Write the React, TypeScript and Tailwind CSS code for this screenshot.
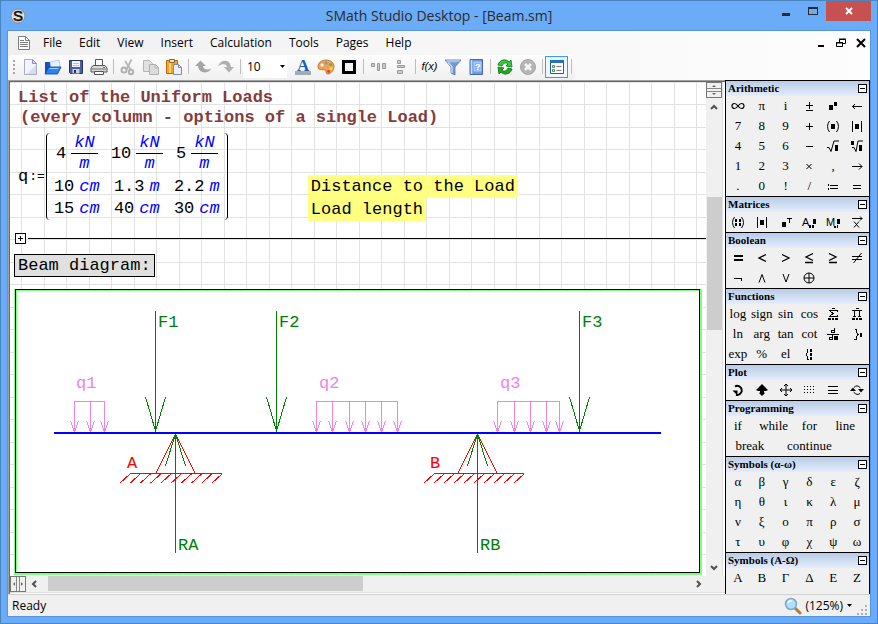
import { useState, type ReactNode } from "react";

type PaletteItem = {
  label: string;
  text?: string;
  icon?: ReactNode;
  span?: string;
};

type PaletteSection = {
  title: string;
  items: PaletteItem[];
};

const menus = ["File", "Edit", "View", "Insert", "Calculation", "Tools", "Pages", "Help"];

function textItems(symbols: string): PaletteItem[] {
  return symbols.split(" ").map((symbol) => ({ label: symbol, text: symbol }));
}

function Glyph({ children, smooth }: { children: ReactNode; smooth?: boolean }) {
  return (
    <svg aria-hidden="true" className="size-4" viewBox="0 0 16 16" fill="none" stroke="black" shapeRendering={smooth ? "auto" : "crispEdges"}>
      {children}
    </svg>
  );
}

function GlyphText({ x, y, size, children }: { x: number; y: number; size: number; children: string }) {
  return <text x={x} y={y} fontSize={size} fill="black" stroke="none" fontFamily="Liberation Sans, sans-serif">{children}</text>;
}

const solid = { fill: "black", stroke: "none" };

const arithmetic: PaletteItem[] = [
  { label: "Infinity", icon: <Glyph smooth><path strokeWidth="1.200" d="M8 8C6.500 6 5.500 5.500 4.500 5.500a2.500 2.500 0 0 0 0 5C5.500 10.500 6.500 10 8 8s2.500-2.500 3.500-2.500a2.500 2.500 0 0 1 0 5C10.500 10.500 9.500 10 8 8z" /></Glyph> },
  { label: "Pi", text: "π" },
  { label: "Imaginary unit", text: "i" },
  { label: "Plus minus", icon: <Glyph><path d="M5 7.500h7M8.500 4v7M5 12.500h7" /></Glyph> },
  { label: "Power", icon: <Glyph><path {...solid} d="M4 7h4v5h-4zM9 4h3v4h-3z" /></Glyph> },
  { label: "Backspace", icon: <Glyph><path d="M3 8.500h10M5.500 6v1M4.500 7v1M4.500 9v1M5.500 10v1" /></Glyph> },
  ...textItems("7 8 9"),
  { label: "Plus", icon: <Glyph><path d="M5 8.500h7M8.500 5v7" /></Glyph> },
  { label: "Parentheses", icon: <Glyph smooth><path d="M4.500 3Q.5 8.500 4.500 14M11.500 3Q15.500 8.500 11.500 14" /><path {...solid} d="M6 6h4v5h-4z" /></Glyph> },
  { label: "Absolute", icon: <Glyph><path d="M3.500 3v11M12.500 3v11" /><path {...solid} d="M6 6h4v5h-4z" /></Glyph> },
  ...textItems("4 5 6"),
  { label: "Minus", icon: <Glyph><path d="M5 8.500h7" /></Glyph> },
  { label: "Square root", icon: <Glyph smooth><path d="M2 9.500h2l2 4 3-10.500h5" /><path {...solid} d="M10 7h3v6h-3z" /></Glyph> },
  { label: "Nth root", icon: <Glyph smooth><path d="M3 9.500h2l2 4 2-10.500h5" /><path {...solid} d="M10 7h3v6h-3zM2 3h3v4h-3z" /></Glyph> },
  ...textItems("1 2 3"),
  { label: "Cross product", icon: <Glyph smooth><path d="M5.500 6l5 5M10.500 6l-5 5" /></Glyph> },
  { label: "Comma", text: "," },
  { label: "Symbolic evaluation", icon: <Glyph smooth><path d="M3 8.500h10M10 5.500l3 3-3 3" /></Glyph> },
  ...textItems(". 0 ! /"),
  { label: "Definition", icon: <Glyph><path strokeWidth="1" d="M3.500 6v2M3.500 10v2M5 7.500h8M5 10.500h8" /></Glyph> },
  { label: "Numeric evaluation", icon: <Glyph><path d="M4 7.500h8M4 10.500h8" /></Glyph> },
];

const matrices: PaletteItem[] = [
  { label: "Matrix", icon: <Glyph smooth><path d="M4.500 3Q.5 8.500 4.500 14M11.500 3Q15.500 8.500 11.500 14" /><path {...solid} d="M5 5h2v3h-2zM9 5h2v3h-2zM5 9h2v3h-2zM9 9h2v3h-2z" /></Glyph> },
  { label: "Determinant", icon: <Glyph><path d="M3.500 3v11M12.500 3v11" /><path {...solid} d="M6 6h4v5h-4z" /></Glyph> },
  { label: "Transpose", icon: <Glyph><path {...solid} d="M4 8h4v5h-4z" /><path d="M9 4.500h5M11.500 4v5" /></Glyph> },
  { label: "Algebraic addition", icon: <Glyph><GlyphText x={1} y={12} size={11}>A</GlyphText><path {...solid} d="M8 11h2v3h-2zM11 11h2v3h-2zM12 5h3v5h-3z" /></Glyph> },
  { label: "Minor", icon: <Glyph><GlyphText x={1} y={12} size={11}>M</GlyphText><path {...solid} d="M9 12h2v2h-2zM12 11h1v3h-1zM12 5h3v5h-3z" /></Glyph> },
  { label: "Vectorize", icon: <Glyph smooth><path d="M3 4.500h10M11 2.500l2 2-2 2M5 7.500l5 6M10 7.500l-5 6" /></Glyph> },
];

const boolean: PaletteItem[] = [
  { label: "Equal", icon: <Glyph><path {...solid} d="M4 5h9v2h-9zM4 9h9v2h-9z" /></Glyph> },
  { label: "Less", icon: <Glyph smooth><path strokeWidth="1.300" d="M12 4.500l-7 3.500 7 3.500" /></Glyph> },
  { label: "Greater", icon: <Glyph smooth><path strokeWidth="1.300" d="M4 4.500l7 3.500-7 3.500" /></Glyph> },
  { label: "Less or equal", icon: <Glyph smooth><path strokeWidth="1.300" d="M12 3.500l-7 3.500 7 3.500M4 12.500h8" /></Glyph> },
  { label: "Greater or equal", icon: <Glyph smooth><path strokeWidth="1.300" d="M4 3.500l7 3.500-7 3.500M4 12.500h8" /></Glyph> },
  { label: "Not equal", icon: <Glyph smooth><path d="M3 6.500h10M3 9.500h10M12.500 3l-8 10" /></Glyph> },
  { label: "Not", icon: <Glyph><path d="M4 8.500h8M11.500 8v3" /></Glyph> },
  { label: "And", icon: <Glyph smooth><path d="M5 12.500l3-8 3 8" /></Glyph> },
  { label: "Or", icon: <Glyph smooth><path d="M5 4l3 8 3-8" /></Glyph> },
  { label: "Exclusive or", icon: <Glyph smooth><circle cx="8" cy="8" r="5" /><path d="M8 3v10M3 8h10" /></Glyph> },
];

const functions: PaletteItem[] = [
  ...textItems("log sign sin cos"),
  { label: "Summation", icon: <Glyph><path d="M12.500 6V4.500H4.500L8 7.500 4.500 10.500H12.500V9M7 2.500h3" /><path {...solid} d="M3 12h3v2h-3zM7 12h2v2h-2zM10 12h3v2h-3z" /></Glyph> },
  { label: "Product", icon: <Glyph><path d="M3 4.500h10M5.500 4v7M10.500 4v7M4 10.500h3M9 10.500h3M7 2.500h3" /><path {...solid} d="M3 12h3v2h-3zM7 12h2v2h-2zM10 12h3v2h-3z" /></Glyph> },
  ...textItems("ln arg tan cot"),
  { label: "Differentiation", icon: <Glyph><path d="M2 8.500h12M9.500 2v5M9 6.500H6.500V4.500H9M7.500 9v5M7 13.500H4.500V11.500H7" /><path {...solid} d="M9 10h4v4h-4z" /></Glyph> },
  { label: "Integral", icon: <Glyph><path d="M6 3.500h1.500M7.500 4v3M8.500 7v3M9.500 8v1M7.500 10v2M5 13.500h2.500V12" /><path {...solid} d="M11 7h2v4h-2z" /></Glyph> },
  ...textItems("exp % el"),
  { label: "Algorithm", icon: <Glyph><path d="M7 3.500H6.500V7M5.500 7v3M6.500 10v4M7 13.500h1" /><path {...solid} d="M9 3h2v3h-2zM9 7h2v3h-2zM9 11h2v3h-2z" /></Glyph> },
];

const plot: PaletteItem[] = [
  { label: "Rotate", icon: <Glyph smooth><path strokeWidth="2" d="M5 4.500a4.500 4.500 0 1 1 1 8.200" /><path {...solid} d="M2.500 8.500h5v5z" /></Glyph> },
  { label: "Scale", icon: <Glyph smooth><path {...solid} d="M8 2l6 6-2 1h-2v1.500l1 .5-3 3-3-3 1-.5V9H4L2 8z" /></Glyph> },
  { label: "Move", icon: <Glyph smooth><path d="M8 2v12M2 8h12M6 4l2-2 2 2M6 12l2 2 2-2M4 6L2 8l2 2M12 6l2 2-2 2" /></Glyph> },
  { label: "Graph by points", icon: <Glyph><path strokeDasharray="1 2" d="M3 4.500h11M3 7.500h11M3 10.500h11" /></Glyph> },
  { label: "Graph by lines", icon: <Glyph><path d="M3 4.500h10M3 8.500h10M3 11.500h10" /></Glyph> },
  { label: "Refresh", icon: <Glyph smooth><path d="M5 5.500Q8 2 11.500 6M11 11.500Q8 14 4.500 10" /><path {...solid} d="M9 7h6l-3 3.500zM1 9h6L4 5.500z" /></Glyph> },
];

const programming: PaletteItem[] = [
  { label: "if", text: "if" },
  { label: "while", text: "while", span: "col-span-2" },
  { label: "for", text: "for" },
  { label: "line", text: "line", span: "col-span-2" },
  { label: "break", text: "break", span: "col-span-2" },
  { label: "continue", text: "continue", span: "col-span-3" },
];

const sections: PaletteSection[] = [
  { title: "Arithmetic", items: arithmetic },
  { title: "Matrices", items: matrices },
  { title: "Boolean", items: boolean },
  { title: "Functions", items: functions },
  { title: "Plot", items: plot },
  { title: "Programming", items: programming },
  { title: "Symbols (α-ω)", items: textItems("α β γ δ ε ζ η θ ι κ λ μ ν ξ ο π ρ σ τ υ φ χ ψ ω") },
  { title: "Symbols (Α-Ω)", items: textItems("Α Β Γ Δ Ε Ζ Η Θ Ι Κ Λ Μ") },
];

function Palette({ title, items }: PaletteSection) {
  const [open, setOpen] = useState(true);
  return (
    <section className="shrink-0 border-t border-black">
      <div className="flex h-[15px] items-center justify-between bg-linear-to-b from-[#b9cce6] to-[#e4edfb] px-0.5">
        <h2 className="text-[11px] leading-[15px] font-bold">{title}</h2>
        <button type="button" aria-label={`Toggle ${title}`} aria-expanded={open} onClick={() => setOpen(!open)} className="flex size-[9px] items-center justify-center border border-black bg-white">
          <span className="h-px w-[5px] bg-black" />
        </button>
      </div>
      {open && (
        <div className="grid grid-cols-6">
          {items.map((item) => (
            <button type="button" key={item.label} aria-label={item.label} className={`flex h-5 items-center justify-center text-[13px] leading-5 ${item.span ?? ""}`}>
              {item.icon ?? item.text}
            </button>
          ))}
        </div>
      )}
    </section>
  );
}

function ToolButton({ label, active, children }: { label: string; active?: boolean; children: ReactNode }) {
  return (
    <button type="button" aria-label={label} aria-pressed={active} className={`flex h-[22px] w-[23px] items-center justify-center ${active ? "border border-[#3399ff] bg-[#eef6ff]" : ""}`}>
      <svg aria-hidden="true" className="size-[18px] shrink-0" viewBox="0 0 18 18" fill="none">{children}</svg>
    </button>
  );
}

function Separator() {
  return <span className="ml-[3px] mr-0.5 h-[15px] w-px bg-[#bdbdbd]" />;
}

function Toolbar() {
  return (
    <div role="toolbar" className="flex h-[25px] items-center self-start rounded-sm bg-linear-to-b from-[#fdfdfd] to-[#f0f0f0] pr-px pb-0.5">
      <svg aria-hidden="true" className="mr-[3px] ml-[5px] h-4 w-0.5" viewBox="0 0 2 16"><path d="M1 1v14" stroke="#a9a9a9" strokeWidth="2" strokeDasharray="2 2" /></svg>
      <ToolButton label="New">
        <path d="M3.500 1.500h8l4 4v11h-12z" fill="#f1f4fc" stroke="#a9adba" /><path d="M11.500 1.500v4h4z" fill="#cfd6e8" stroke="#9096a8" /><path d="M6 16l9-9v9z" fill="#d5dcf0" />
      </ToolButton>
      <ToolButton label="Open">
        <path d="M1 4h5l1 1h6v11H1z" fill="#1750c4" /><path d="M6 4l9-2 1 7-9 3z" fill="#e9f3ff" stroke="#82aee8" strokeWidth=".6" /><path d="M1 16L4.500 9H17l-3.500 7z" fill="#2a83f2" stroke="#0b3fae" strokeWidth=".8" /><path d="M5.500 10.500h9" stroke="#9fd0ff" />
      </ToolButton>
      <ToolButton label="Save">
        <path d="M2.500 2.500h13v13h-12l-1-1z" fill="#4a5f9c" stroke="#26355f" /><path d="M5 3h8v6H5z" fill="#f1f4fb" /><path d="M6 5.500h6M6 7.500h6" stroke="#b8c2da" /><path d="M5.500 11h7v4.500h-7z" fill="#c8cede" /><path d="M7 12h2v3H7z" fill="#26355f" />
      </ToolButton>
      <ToolButton label="Print">
        <path d="M5.500 1.500h7v6h-7z" fill="#fff" stroke="#555" /><path d="M3 7.500h12l2 2.500v4H1v-4z" fill="#d8d8d8" stroke="#555" /><path d="M2 11h14" stroke="#777" /><path d="M4.500 13.500h9v3h-9z" fill="#fff" stroke="#555" /><path d="M13 9.500h2" stroke="#3aa83a" />
      </ToolButton>
      <Separator />
      <ToolButton label="Cut">
        <path d="M12.500 1.500l-5 10M6 3l6 9" stroke="#b9b9b9" strokeWidth="2" /><circle cx="5" cy="12" r="2.500" stroke="#b0b0b0" strokeWidth="2" /><circle cx="12" cy="14" r="2.200" stroke="#b0b0b0" strokeWidth="2" />
      </ToolButton>
      <ToolButton label="Copy">
        <path d="M1.500 2.500h6l3 3v8h-9z" fill="#e0e0e0" stroke="#b5b5b5" /><path d="M7.500 6.500h6l3 3v7h-9z" fill="#dcdcdc" stroke="#b0b0b0" /><path d="M13 6.500v3.500h3.500" stroke="#b0b0b0" />
      </ToolButton>
      <ToolButton label="Paste">
        <path d="M1.500 2.500h11v13h-11z" fill="#f5a623" stroke="#b8670d" /><path d="M4 4h2v11H4z" fill="#ffd27a" /><path d="M4.500 1.500h5v3h-5z" fill="#efe2b0" stroke="#8a6a2a" /><path d="M8.500 6.500h5l3 3v7h-8z" fill="#edf1fb" stroke="#7e8cb3" /><path d="M13.500 6.500v3h3" stroke="#7e8cb3" />
      </ToolButton>
      <Separator />
      <ToolButton label="Undo">
        <path d="M1 8l5.500-5.500L12 8H9c0 3 3 4 8 3-3 5-12 5-13-3z" fill="#a5a5a5" />
      </ToolButton>
      <ToolButton label="Redo">
        <path d="M17 9l-5 5.500L7 9h3c0-3-4-4-9-1C4 1 13 1 14 9z" fill="#b0b0b0" />
      </ToolButton>
      <Separator />
      <label className="relative mr-1 flex h-[22px] items-center bg-white">
        <span className="sr-only">Font size</span>
        <select defaultValue="10" className="h-[22px] w-[44px] appearance-none bg-white pl-1 text-xs outline-none">
          <option>8</option>
          <option>10</option>
          <option>12</option>
        </select>
        <svg aria-hidden="true" className="pointer-events-none absolute right-0.5 h-[3px] w-[5px]" viewBox="0 0 5 3"><path d="M0 0h5L2.500 3z" /></svg>
      </label>
      <ToolButton label="Text color">
        <path d="M1 13h16v4H1z" fill="#a6abb3" /><text x="3" y="13" fontSize="17" fontWeight="700" fontFamily="Liberation Serif, serif" fill="#1a5fb4">A</text>
      </ToolButton>
      <ToolButton label="Background color">
        <path d="M9 2c5 0 8 3 8 6.500S14 16 11 16c-3 0-1-3-3-4s-7 1-7-3 3-7 8-7z" fill="#efa24f" stroke="#b86a20" strokeWidth=".8" /><circle cx="5" cy="7" r="1.500" fill="#fff" /><circle cx="9" cy="5" r="1.500" fill="#5e9fe8" /><circle cx="13.500" cy="6.500" r="1.500" fill="#5bb552" /><circle cx="14" cy="10.500" r="1.500" fill="#f5e04f" /><circle cx="11.500" cy="13.500" r="1.400" fill="#d83f2e" />
      </ToolButton>
      <ToolButton label="Show border">
        <path d="M3.500 3.500h11v11h-11z" fill="#f4f4f4" stroke="#000" strokeWidth="3" />
      </ToolButton>
      <Separator />
      <ToolButton label="Align horizontally">
        <path d="M2.500 5.500h3v3h-3zM8.500 5.500h2v7h-2zM13.500 5.500h3v5h-3z" fill="#ccc" stroke="#999" />
      </ToolButton>
      <ToolButton label="Align vertically">
        <path d="M5.500 2.500h3v3h-3zM5.500 7.500h7v2h-7zM5.500 12.500h5v3h-5z" fill="#ccc" stroke="#999" />
      </ToolButton>
      <Separator />
      <button type="button" aria-label="Insert function" className="h-[22px] w-[23px] text-center font-['Liberation_Sans',sans-serif] text-[11px] italic">f(x)</button>
      <ToolButton label="Filter">
        <path d="M1 2h16l-6 7v8l-4-2V9z" fill="#7698cf" stroke="#5373a8" strokeWidth=".8" /><path d="M4 4l4 5v6" stroke="#c5d6f2" strokeWidth="1.500" /><ellipse cx="9" cy="3" rx="7.500" ry="1.500" fill="#a9c1e8" />
      </ToolButton>
      <ToolButton label="Reference book">
        <path d="M3 1.500h12.500v15H3z" fill="#6f9be3" stroke="#4668ab" /><path d="M4.500 2v14" stroke="#c6d9fa" strokeWidth="1.500" /><path d="M7 4h7v9H7z" fill="#8cb2f0" stroke="#cfe0ff" strokeWidth=".7" /><text x="8" y="12" fontSize="9" fontWeight="700" fontFamily="Liberation Sans, sans-serif" fill="#fff">?</text>
      </ToolButton>
      <Separator />
      <ToolButton label="Recalculate">
        <path d="M2 7c1-5 8-7 11-3l2-2 1 7-6-1 2-2c-2-2-5-1-6 2z" fill="#37c937" stroke="#08780c" strokeWidth=".8" /><path d="M16 11c-1 5-8 7-11 3l-2 2-1-7 6 1-2 2c2 2 5 1 6-2z" fill="#21a528" stroke="#08780c" strokeWidth=".8" />
      </ToolButton>
      <ToolButton label="Interrupt">
        <circle cx="9" cy="9" r="7.500" fill="#b5b5b5" stroke="#a5a5a5" /><path d="M6 6l6 6M12 6l-6 6" stroke="#f5f5f5" strokeWidth="2.500" />
      </ToolButton>
      <Separator />
      <ToolButton label="Side panel" active>
        <path d="M2.500 2.500h13v13h-13z" fill="#fff" stroke="#1e5c9c" /><path d="M2 2h14v3H2z" fill="#2670b8" /><path d="M4.500 7.500h2v2h-2zM4.500 11.500h2v2h-2z" stroke="#3f9b45" /><path d="M8.500 8.500h5M8.500 12.500h5" stroke="#777" />
      </ToolButton>
      <Separator />
    </div>
  );
}

function Fraction({ value }: { value: string }) {
  return (
    <>
      <span>{value}</span>
      <span className="flex flex-col text-center leading-5 text-[#0000ff] italic">
        <span className="border-b border-black px-[3px]">kN</span>
        <span>m</span>
      </span>
    </>
  );
}

const loadRows = [
  [["10", "cm"], ["1.3", "m"], ["2.2", "m"]],
  [["15", "cm"], ["40", "cm"], ["30", "cm"]],
];

function LoadMatrix() {
  return (
    <div className="mb-px flex items-center">
      <span>q</span>
      <span className="mx-px text-[13px]">:=</span>
      <table className="table-fixed border-separate border-spacing-0 rounded-[4px] border-x border-black">
        <tbody>
          <tr>
            {["4", "10", "5"].map((value) => (
              <td key={value} className="h-[43px] w-15 p-0 align-top">
                <div className="flex items-center justify-center gap-[5px]"><Fraction value={value} /></div>
              </td>
            ))}
          </tr>
          {loadRows.map((row, index) => (
            <tr key={index}>
              {row.map(([value, unit], column) => (
                <td key={column} className="h-[22px] w-15 p-0">
                  <div className="flex justify-center gap-[5px] leading-[22px]"><span>{value}</span><i className="text-[#0000ff]">{unit}</i></div>
                </td>
              ))}
            </tr>
          ))}
        </tbody>
      </table>
    </div>
  );
}

const forces = [
  { name: "F1", x: 139.5 },
  { name: "F2", x: 260.5 },
  { name: "F3", x: 563.5 },
];

const loads = [
  { name: "q1", labelX: 60, xs: [58.5, 74.5, 88.5] },
  { name: "q2", labelX: 303, xs: [300.5, 316.5, 333.5, 349.5, 365.5, 381.5] },
  { name: "q3", labelX: 484, xs: [481.5, 498.5, 514.5, 530.5, 543.5] },
];

const supports = [
  { name: "A", x: 159.5, ground: 114, width: 92, labelX: 111 },
  { name: "B", x: 461.5, ground: 418, width: 90, labelX: 414 },
];

function BeamDiagram() {
  return (
    <svg role="img" aria-label="Beam diagram" className="block" width="683" height="282" viewBox="0 0 683 282" fill="none" fontSize="17" shapeRendering="crispEdges">
      {loads.map(({ name, labelX, xs }) => (
        <g key={name} stroke="violet">
          <text x={labelX} y="98" fill="violet" stroke="none">{name}</text>
          <path d={`M${xs[0]} 111.5H${xs[xs.length - 1]}`} />
          {xs.map((x) => <path key={x} d={`M${x} 111v31M${x - 4} 131l4 11 4 -11`} />)}
        </g>
      ))}
      {forces.map(({ name, x }) => (
        <g key={name} stroke="green">
          <text x={x + 2.5} y="37" fill="green" stroke="none">{name}</text>
          <path d={`M${x} 21v121M${x - 10} 107l10 34 10 -34`} />
        </g>
      ))}
      {supports.map(({ name, x, ground, width, labelX }) => (
        <g key={name}>
          <path stroke="red" d={`M${x - 19.5} 183l19.500 -39 19.500 39M${ground} 183.5h${width}`} />
          {Array.from({ length: 10 }, (_, i) => <path key={i} stroke="red" d={`M${ground + (i * width) / 9} 184l-10 9`} />)}
          <text x={labelX} y="178" fill="red">{name}</text>
          <path stroke="green" d={`M${x} 144v119M${x - 10} 176l10 -32 10 32`} />
          <text x={x + 2.5} y="260" fill="green">{`R${name}`}</text>
        </g>
      ))}
      <path d="M38 143h607" stroke="blue" strokeWidth="2" />
    </svg>
  );
}

function Worksheet() {
  return (
    <main className="relative min-w-0 flex-1 overflow-hidden bg-white font-['Liberation_Mono',monospace] text-[17px]">
      <svg aria-hidden="true" className="absolute inset-0 size-full">
        <defs>
          <pattern id="grid" width="45" height="45" patternUnits="userSpaceOnUse">
            <path d="M11.500 0v45M34.500 0v45M0 22.500h45M0 .5h45" stroke="#e2e2e2" shapeRendering="crispEdges" />
          </pattern>
        </defs>
        <rect width="100%" height="100%" fill="url(#grid)" />
      </svg>
      <div className="relative flex flex-col pt-1.5 pl-1 whitespace-nowrap">
        <h1 className="pl-1 leading-5 font-bold text-[#843c3c]">
          <span className="block">List of the Uniform Loads</span>
          <span className="block pl-0.5">(every column - options of a single Load)</span>
        </h1>
        <div className="mt-[5px] flex items-end pl-1">
          <LoadMatrix />
          <div className="ml-20 flex flex-col items-start leading-[22px]">
            <span className="bg-[#ffff80] px-[3px] pt-px">Distance to the Load</span>
            <span className="bg-[#ffff80] px-[3px] pt-px">Load length</span>
          </div>
        </div>
        <div className="mt-3 flex items-center gap-0.5 pl-px">
          <button type="button" aria-label="Expand area" className="size-[11px] border border-black bg-white">
            <svg aria-hidden="true" className="size-[9px]" viewBox="0 0 9 9"><path d="M2 4.500h5M4.500 2v5" stroke="black" /></svg>
          </button>
          <span className="h-px flex-1 bg-black" />
        </div>
        <p className="mt-2.5 self-start border border-black bg-[#e0e0e0] px-[3px] leading-[21px]">Beam diagram:</p>
        <div className="mt-3 mr-1 bg-[#80ff80] pr-0.5 pb-0.5 pl-px">
          <div className="overflow-hidden border border-black bg-white shadow-[inset_1px_1px_0_#80ff80]">
            <BeamDiagram />
          </div>
        </div>
      </div>
    </main>
  );
}

function Chevron({ d }: { d: string }) {
  return <svg aria-hidden="true" className="size-2" viewBox="0 0 8 8" fill="none" stroke="#505050" strokeWidth="2"><path d={d} /></svg>;
}

function VerticalScroll() {
  return (
    <div className="flex w-4 flex-col items-stretch bg-[#f0f0f0]">
      <button type="button" aria-label="Split horizontally" className="flex h-4 items-center justify-center border border-[#777] bg-[#f0f0f0]">
        <svg aria-hidden="true" className="h-3.5 w-3.5" viewBox="0 0 14 14"><path d="M0 5.500h14M0 8.500h14" stroke="#888" /><path d="M5 4h4L7 2zM5 10h4l-2 2z" fill="#666" /></svg>
      </button>
      <button type="button" aria-label="Scroll up" className="flex h-[17px] items-center justify-center"><Chevron d="M1 6l3-3 3 3" /></button>
      <div className="flex flex-1 flex-col pl-px">
        <div className="grow-[82]" />
        <div className="grow-[133] bg-[#cdcdcd]" />
        <div className="grow-[229]" />
      </div>
      <button type="button" aria-label="Scroll down" className="flex h-[17px] items-center justify-center"><Chevron d="M1 2l3 3 3-3" /></button>
    </div>
  );
}

function HorizontalScroll() {
  return (
    <div className="flex h-4 shrink-0 items-stretch bg-[#f0f0f0]">
      <button type="button" aria-label="Split vertically" className="flex w-4 items-center justify-center border border-[#777] bg-[#f0f0f0]">
        <svg aria-hidden="true" className="h-3.5 w-3.5" viewBox="0 0 14 14"><path d="M5.500 0v14M8.500 0v14" stroke="#888" /><path d="M4 5v4L2 7zM10 5v4l2-2z" fill="#666" /></svg>
      </button>
      <button type="button" aria-label="Scroll left" className="flex w-[22px] items-center pl-1"><Chevron d="M6 1L3 4l3 3" /></button>
      <div className="flex flex-1 pb-px">
        <div className="grow-[315] bg-[#cdcdcd]" />
        <div className="grow-[328]" />
      </div>
      <button type="button" aria-label="Scroll right" className="mr-[18px] flex w-[17px] items-center justify-center"><Chevron d="M2 1l3 3-3 3" /></button>
    </div>
  );
}

function TitleBar() {
  return (
    <header className="grid h-[29px] shrink-0 grid-cols-[1fr_auto_1fr] items-center px-1.5 text-[#2b2b2b]">
      <svg aria-hidden="true" className="ml-[3px] size-4" viewBox="0 0 16 16">
        <circle cx="8" cy="8" r="7" fill="#dedede" stroke="#8d8d8d" />
        <text x="3" y="13" fontSize="15" stroke="#111" strokeWidth=".6" fontFamily="Liberation Sans, sans-serif" fill="#111">S</text>
      </svg>
      <span className="text-sm">SMath Studio Desktop - [Beam.sm]</span>
      <div className="flex items-start self-start justify-self-end">
        <button type="button" aria-label="Minimize" className="flex h-5 w-7 items-center justify-center">
          <svg aria-hidden="true" className="size-3" viewBox="0 0 12 12"><path d="M2 9.500h8" stroke="currentColor" strokeWidth="3" shapeRendering="crispEdges" /></svg>
        </button>
        <button type="button" aria-label="Maximize" className="flex h-5 w-[26px] items-center justify-center">
          <svg aria-hidden="true" className="size-3" viewBox="0 0 12 12" fill="none" stroke="currentColor" shapeRendering="crispEdges"><path d="M1.500 2.500h9v7h-9zM1 3.500h10" /></svg>
        </button>
        <button type="button" aria-label="Close" className="flex h-5 w-[45px] items-center justify-center bg-[#c75050]">
          <svg aria-hidden="true" className="size-2" viewBox="0 0 8 8" stroke="white" strokeWidth="2"><path d="M1 1l6 6M7 1L1 7" /></svg>
        </button>
      </div>
    </header>
  );
}

function MenuBar() {
  return (
    <nav className="flex h-6 items-center gap-px pr-[3px] pl-2">
      <svg aria-hidden="true" className="mr-0.5 size-4" viewBox="0 0 16 16" fill="none" stroke="#7d7d7d">
        <path d="M2.500 1.500h7l4 4v9h-11z" fill="#fff" /><path d="M9.500 1.500v4h4M4 5.500h4M4 7.500h8M4 9.500h8M4 11.500h8" />
      </svg>
      {menus.map((menu) => <button type="button" key={menu} className="px-2 text-xs">{menu}</button>)}
      <div className="ml-auto flex items-center gap-2">
        <button type="button" aria-label="Minimize document" className="size-3"><svg aria-hidden="true" className="size-3" viewBox="0 0 12 12"><path d="M3 9h6" stroke="black" strokeWidth="2" /></svg></button>
        <button type="button" aria-label="Restore document" className="size-3"><svg aria-hidden="true" className="size-3" viewBox="0 0 12 12" fill="none" stroke="black"><path d="M4.500 5V2.500h6v4H8M4 2h7M1.500 5.500h6v4h-6zM1 6h7" /></svg></button>
        <button type="button" aria-label="Close document" className="size-3"><svg aria-hidden="true" className="size-3" viewBox="0 0 12 12" stroke="black" strokeWidth="2"><path d="M2 2l8 8M10 2l-8 8" /></svg></button>
      </div>
    </nav>
  );
}

function StatusBar() {
  return (
    <footer className="flex h-[22px] shrink-0 items-center border-t border-[#d0d0d0] bg-[#f0f0f0] pr-0.5 pl-1 text-xs">
      <span>Ready</span>
      <button type="button" className="ml-auto flex items-center gap-[3px]">
        <svg aria-hidden="true" className="size-[18px]" viewBox="0 0 18 18">
          <path d="M11 11l5 5" stroke="#b87932" strokeWidth="3" strokeLinecap="round" /><circle cx="7" cy="7" r="5.500" fill="#aee0fb" stroke="#7fa9c9" strokeWidth="1.500" /><path d="M4 6q1-3 4-2" stroke="white" strokeWidth="1.500" fill="none" />
        </svg>
        (125%)
        <svg aria-hidden="true" className="ml-px h-[3px] w-[5px]" viewBox="0 0 5 3"><path d="M0 0h5L2.500 3z" /></svg>
      </button>
      <svg aria-hidden="true" className="mt-2 ml-1 size-3" viewBox="0 0 12 12" fill="#b0b0b0"><path d="M9 1h2v2H9zM9 5h2v2H9zM9 9h2v2H9zM5 5h2v2H5zM5 9h2v2H5zM1 9h2v2H1z" /></svg>
    </footer>
  );
}

export default function App() {
  return (
    <div className="flex h-screen flex-col border border-[#4b85bf] bg-[#6aacf7] font-['Open_Sans',sans-serif] text-black">
      <TitleBar />
      <div className="mx-1.5 mb-1.5 flex min-h-0 flex-1 flex-col border border-[#5594de] bg-[#f0f0f0]">
        <div className="flex shrink-0 flex-col bg-linear-to-r from-[#f0f0f0] to-[#fdfdfd]">
          <MenuBar />
          <Toolbar />
        </div>
        <div className="flex min-h-0 flex-1">
          <div className="flex min-w-0 flex-1 flex-col border-t border-l border-[#a0a0a0]">
            <div className="flex min-h-0 flex-1 flex-col border-t border-l border-[#696969]">
              <div className="flex min-h-0 flex-1">
                <Worksheet />
                <VerticalScroll />
                <div className="w-[3px] border-l border-[#e0e0e0] bg-white" />
              </div>
              <HorizontalScroll />
              <div className="h-0.5 shrink-0 border-t border-[#e0e0e0] bg-white" />
            </div>
          </div>
          <aside className="flex w-[145px] shrink-0 flex-col overflow-hidden border-x border-black bg-[#f0f0f0] font-['Liberation_Serif','DejaVu_Serif',serif]">
            {sections.map((section) => <Palette key={section.title} {...section} />)}
          </aside>
        </div>
        <StatusBar />
      </div>
    </div>
  );
}
